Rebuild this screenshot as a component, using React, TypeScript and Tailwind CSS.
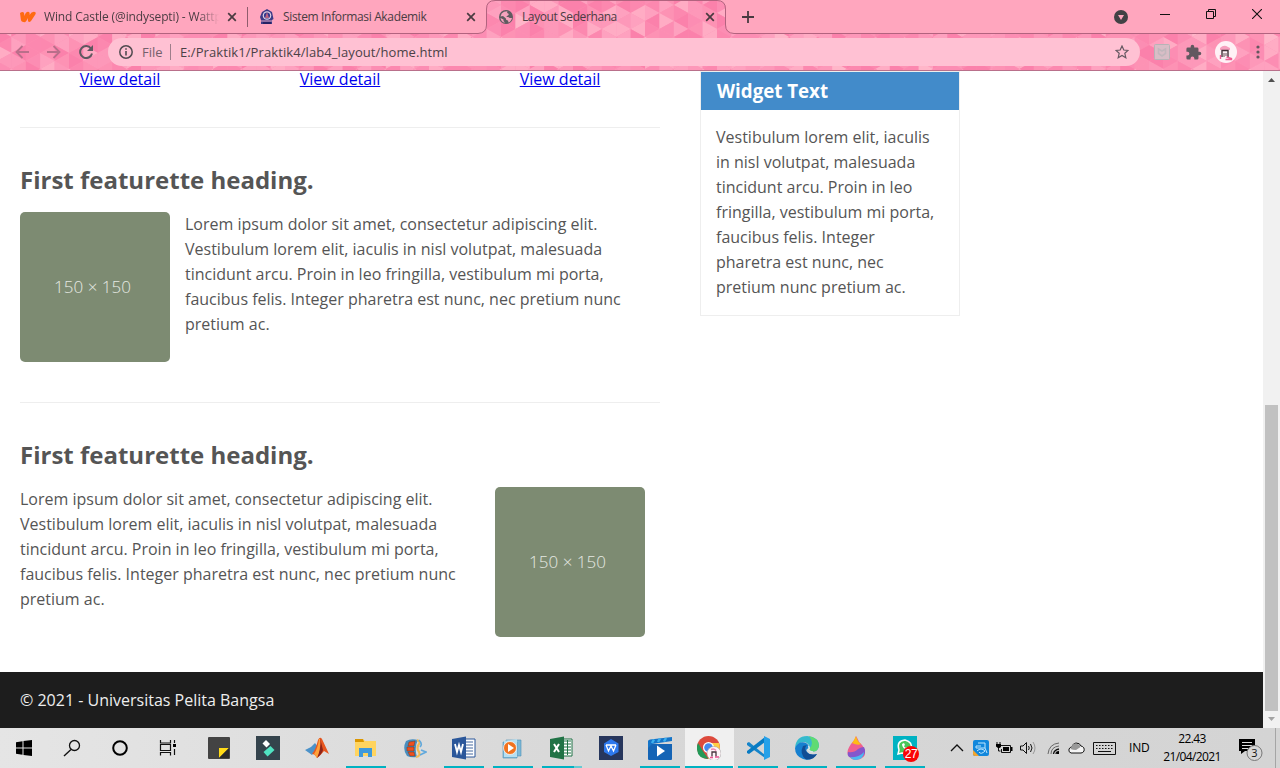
import React from "react";

const pinks = ["#fb7ea9", "#fc8db3", "#fd9abb", "#fea6c2", "#ffb3c9", "#fc86ae", "#fd93b5", "#ffc0cf"];

function noise(a: number, b: number) {
  const v = Math.sin(a * 127.1 + b * 311.7) * 43758.5453;
  return v - Math.floor(v);
}

function Triangles() {
  const shapes: React.ReactNode[] = [];
  for (let c = 0; c < 90; c++) {
    for (let r = -1; r < 6; r++) {
      const x = c * 14.4 - 3;
      const y = r * 16 + (c % 2) * 8 - 3;
      const n = Math.floor(noise(c, r) * 7.3);
      const m = Math.floor(noise(c + 40, r + 9) * 7);
      shapes.push(
        <path key={`a${c}-${r}`} fill={pinks[n]} d={`M${x} ${y}l14.5 8l-14.5 8z`} />,
        <path key={`b${c}-${r}`} fill={pinks[m]} d={`M${x + 14.5} ${y + 8}v16l-14.5 -8z`} />,
      );
    }
  }
  return <g opacity=".8">{shapes}</g>;
}

function ChromeBackdrop() {
  return (
    <svg className="absolute inset-0" width="1280" height="71" viewBox="0 0 1280 71">
      <defs>
        <clipPath id="themed">
          <path d="M0 34H478Q486 34 486 25V9Q486 1 495 1H717Q726 1 726 9V25Q726 34 734 34H1280V70H0z" />
        </clipPath>
      </defs>
      <rect width="1280" height="71" fill="#ffa6be" />
      <g clipPath="url(#themed)">
        <rect width="1280" height="71" fill="#fd93b5" />
        <Triangles />
      </g>
      <path d="M0 33.5H478Q486.500 33 486.500 25V9Q486.500 .5 495 .5H717Q725.500 .5 725.500 9V25Q725.500 33 734 33.500H1280" fill="none" stroke="#b2637f" />
      <path d="M0 70.500H1280" stroke="#b9708b" />
    </svg>
  );
}

function CloseX() {
  return (
    <svg width="10" height="10" viewBox="0 0 10 10" className="shrink-0">
      <path d="M1.200 1.200l7.600 7.600M8.800 1.200l-7.600 7.600" stroke="#4a3a40" strokeWidth="1.700" />
    </svg>
  );
}

function TabStrip() {
  return (
    <div className="relative flex h-[34px] items-center text-[12px] text-[#4a3c42]">
      <div className="flex w-[247px] items-center pl-5">
        <svg width="16" height="14" viewBox="0 0 16 14" className="mr-2">
          <path d="M0 3Q3 1 4 3L4.500 6Q6 1 9 2Q10 3 9.500 5Q12 1 15 2Q16.500 3 15 5L11 11Q9 13 8 11V8Q6 13 3.500 12Q1 12 .8 9z" fill="#ff6a12" />
        </svg>
        <span className="w-[175px] whitespace-nowrap tracking-[-0.120px] [mask-image:linear-gradient(90deg,#000_88%,transparent)]">Wind Castle (@indysepti) - Wattp</span>
        <span className="ml-2 flex"><CloseX /></span>
      </div>
      <div className="h-5 w-px bg-[#8f5c6d]" />
      <div className="flex w-[238px] items-center pl-[11px]">
        <svg width="16" height="16" viewBox="0 0 16 16" className="mr-2">
          <path d="M8 0L13 3L14.500 10L13 11V15H2V11L1 8L3 3z" fill="#3c3a86" />
          <circle cx="8" cy="6.500" r="4.300" fill="#ded1e4" />
          <circle cx="8" cy="6.500" r="3.100" fill="#34378d" />
          <path d="M6 9l2-6l2 6z" fill="#ba6382" /><path d="M2 12h12" stroke="#e0a4c2" />
          <path d="M4 13h8v2H4z" fill="#262365" />
        </svg>
        <span className="w-[174px] whitespace-nowrap tracking-[-0.350px]">Sistem Informasi Akademik</span>
        <span className="ml-[9px] flex"><CloseX /></span>
      </div>
      <div className="flex w-[240px] items-center pl-[13px]">
        <svg width="14" height="14" viewBox="0 0 14 14" className="mr-[9px]">
          <circle cx="7" cy="7" r="7" fill="#5f5b60" />
          <path d="M8.500 1.300Q7.500 3 9 3.400Q10.500 4 9 5.500Q7.500 5.500 7.500 7Q10 6.500 10.500 8H13Q12 12 9.500 12.400L9 10.500Q6.500 10 7 8.500L4 6L1.500 6.500Q2 3 5 1.700z" fill="#f5a2bd" />
          <path d="M1.500 8L4.500 9.500V11L6 12.700Q2 12 1.500 8" fill="#f5a2bd" />
        </svg>
        <span className="w-[174px] whitespace-nowrap tracking-[-0.400px]">Layout Sederhana</span>
        <span className="ml-[9px] flex"><CloseX /></span>
      </div>
      <svg width="12" height="12" className="ml-4"><path d="M6 0v12M0 6h12" stroke="#483a40" strokeWidth="1.800" /></svg>
      <svg width="14" height="14" className="ml-[360px]"><circle cx="7" cy="7" r="7" fill="#424145" /><path d="M4 5h6L7 10z" fill="#ffa6be" /></svg>
      <svg width="10" height="10" className="mb-[6px] ml-8"><path d="M0 5.500h10" stroke="#111" /></svg>
      <svg width="10" height="10" className="mb-[6px] ml-9"><path d="M.5 2.500h7v7h-7zM2.500 2.500v-2h7v7h-2" fill="none" stroke="#111" /></svg>
      <svg width="10" height="10" className="mb-[6px] ml-9"><path d="M0 0l10 10M10 0L0 10" stroke="#111" strokeWidth="1.100" /></svg>
    </div>
  );
}

function Toolbar() {
  return (
    <div className="relative flex h-[37px] items-center pb-px">
      <svg width="14" height="14" className="ml-[15px]"><path d="M14 7H2M7.500 1L1.500 7l6 6" fill="none" stroke="#b96f8a" strokeWidth="1.800" /></svg>
      <svg width="14" height="14" className="ml-[18px]"><path d="M0 7h12M6.500 1l6 6l-6 6" fill="none" stroke="#b96f8a" strokeWidth="1.800" /></svg>
      <svg width="14" height="14" className="ml-[18px]"><path d="M12 3.500A6 6 0 1 0 13 8.500" fill="none" stroke="#5f5960" strokeWidth="2" /><path d="M14 0v6H8z" fill="#5f5960" /></svg>
      <div className="ml-[15px] flex h-7 w-[1032px] items-center rounded-full bg-[#ffc1d3] pl-[11px] text-[13px] text-[#4b4147]">
        <svg width="14" height="14"><circle cx="7" cy="7" r="6.200" fill="none" stroke="#514b50" strokeWidth="1.500" /><path d="M7 6v4.500M7 3.200v1.600" stroke="#514b50" strokeWidth="1.600" /></svg>
        <span className="ml-[9px] w-[21px] pt-px whitespace-nowrap text-[#75606b]">File</span>
        <span className="ml-[7px] h-4 w-px bg-[#9e7e8b]" />
        <span className="ml-[9px] w-[935px] pt-px whitespace-nowrap tracking-[0.090px]">E:/Praktik1/Praktik4/lab4_layout/home.html</span>
        <svg width="14" height="14" viewBox="0 0 14 14"><path d="M7 1l1.800 4l4.200.4l-3.200 2.900l1 4.400L7 10.400l-3.800 2.300l1-4.400L1 5.400l4.200-.4z" fill="none" stroke="#655861" strokeWidth="1.200" /></svg>
      </div>
      <svg width="16" height="16" className="ml-[14px]"><rect x=".5" y=".5" width="15" height="15" rx="1" fill="#d9bdc6" stroke="#b7b4b7" /><path d="M4.500 5L8 7l3.500-2v4.500L8 12L4.500 9.500z" fill="none" stroke="#c3b7bd" strokeWidth="1.600" /></svg>
      <svg width="17" height="17" viewBox="0 0 24 24" className="ml-[15px]"><path d="M20.500 11H19V7a2 2 0 0 0-2-2h-4V3.500a2.500 2.500 0 0 0-5 0V5H4a2 2 0 0 0-2 2v3.800h1.500a2.700 2.700 0 0 1 0 5.400H2V20a2 2 0 0 0 2 2h3.800v-1.500a2.700 2.700 0 0 1 5.400 0V22H17a2 2 0 0 0 2-2v-4h1.500a2.500 2.500 0 0 0 0-5" fill="#625860" /></svg>
      <svg width="22" height="22" className="ml-[13px]">
        <circle cx="11" cy="11" r="11" fill="#fff1f6" />
        <path d="M5 7q4-4 8-1l2 1v2H5z" fill="#f79fbe" /><path d="M7 16V9.500h6V16" fill="none" stroke="#443239" strokeWidth="1.400" /><path d="M9 12v4M11 12v3" stroke="#6b5058" /><path d="M5.500 14v4m6-2l5 1.500v1h-6" stroke="#f05c94" strokeWidth="1.400" fill="none" />
      </svg>
      <svg width="4" height="14" className="ml-[19px]"><circle cx="2" cy="2" r="1.600" fill="#655860" /><circle cx="2" cy="7" r="1.600" fill="#655860" /><circle cx="2" cy="12" r="1.600" fill="#655860" /></svg>
    </div>
  );
}

function Placeholder() {
  return (
    <div className="flex size-[150px] shrink-0 items-center justify-center rounded-[5px] bg-[#7d8b72] pr-[5px] pb-[2px] text-[17px] font-light text-[#e5e9e2]">
      150 × 150
    </div>
  );
}

function Featurette({ flipped = false }: { flipped?: boolean }) {
  return (
    <section className="border-t border-[#eee]">
      <h2 className="mt-[34px] h-[50px] text-[24px] leading-[36px] font-bold">First featurette heading.</h2>
      <div className={flipped ? "flex h-[185px] flex-row-reverse justify-between pr-[15px]" : "flex h-[190px]"}>
        <Placeholder />
        <p className={flipped ? "w-[460px]" : "ml-[15px] w-[460px]"}>
          Lorem ipsum dolor sit amet, consectetur adipiscing elit.
          <br />Vestibulum lorem elit, iaculis in nisl volutpat, malesuada
          <br />tincidunt arcu. Proin in leo fringilla, vestibulum mi porta,
          <br />faucibus felis. Integer pharetra est nunc, nec pretium nunc
          <br />pretium ac.
        </p>
      </div>
    </section>
  );
}

function Page() {
  return (
    <div className="flex h-[657px]">
      <div className="flex w-[1263px] flex-col font-normal">
        <div className="flex h-[601px] pl-5 text-[16px] leading-[25px] text-[#555]">
          <main className="w-[640px]">
            <div className="flex h-[56px]">
              {[0, 1, 2].map((i) => (
                <div key={i} className={i === 2 ? "-mt-[4px] w-[200px] text-center" : "-mt-[4px] mr-5 w-[200px] text-center"}>
                  <a href="#" className="text-[#0000ee] underline">View detail</a>
                </div>
              ))}
            </div>
            <Featurette />
            <Featurette flipped />
          </main>
          <aside className="ml-10 h-[245px] w-[260px] border border-[#eee]">
            <h3 className="h-[38px] bg-[#428bca] pl-4 text-[18.720px] leading-[38px] font-bold text-white">Widget Text</h3>
            <p className="p-[15px] pr-[10px]">
              Vestibulum lorem elit, iaculis
              <br />in nisl volutpat, malesuada
              <br />tincidunt arcu. Proin in leo
              <br />fringilla, vestibulum mi porta,
              <br />faucibus felis. Integer
              <br />pharetra est nunc, nec
              <br />pretium nunc pretium ac.
            </p>
          </aside>
        </div>
        <footer className="flex h-14 items-center bg-[#1d1d1d] pl-5 text-[16px] font-normal text-[#eee]">© 2021 - Universitas Pelita Bangsa</footer>
      </div>
      <div className="flex w-[17px] flex-col items-center justify-between bg-[#f1f1f1]">
        <svg width="17" height="17"><path d="M5 11h7L8.500 7z" fill="#505050" /></svg>
        <div className="mt-auto h-[306px] w-[13px] bg-[#c1c1c1]" />
        <svg width="17" height="17"><path d="M5 6h7L8.500 10z" fill="#a3a3a3" /></svg>
      </div>
    </div>
  );
}

function Icon({ children }: { children: React.ReactNode }) {
  return <svg width="24" height="24" viewBox="0 0 24 24">{children}</svg>;
}

const systemIcons = [
  <Icon><path d="M4 6.300l6.500-1V11.500H4zM11.500 5.100L20 4v7.500h-8.500zM4 12.500h6.500v6.200L4 17.800zM11.500 12.500H20V20l-8.500-1.100z" fill="#000" /></Icon>,
  <Icon><circle cx="14.500" cy="9.500" r="5" fill="none" stroke="#111" strokeWidth="1.300" /><path d="M11 13.500L4 20" stroke="#111" strokeWidth="1.400" /></Icon>,
  <Icon><circle cx="12" cy="12" r="6.800" fill="none" stroke="#000" strokeWidth="2" /></Icon>,
  <Icon><path d="M4.500 4v3h10V4M4.500 19.500v-3h10v3M4.500 8.500h10v6h-10zM18.500 4v3M18.500 13v6" fill="none" stroke="#111" strokeWidth="1.200" /><path d="M17 8h3v3h-3z" /></Icon>,
];

const apps: { icon: React.ReactNode; line?: "full" | "wide" | "split" }[] = [
  { icon: <Icon><rect x="1" y="1" width="22" height="22" rx="1" fill="#434343" /><path d="M12 12h10L12 22z" fill="#ffda17" /><path d="M22 12v10H12z" fill="#2a2a2a" /></Icon> },
  { icon: <Icon><path d="M0 0h24v24H0z" fill="#34434c" /><path d="M10 4l4 4l-3.500 3.500l-4-4z" fill="#fff" /><path d="M14.500 10l4 4l-7 6.500l-4-4.500z" fill="#50e3c2" /></Icon> },
  { icon: <Icon><path d="M0 14l6-3l4-4l3 4l-6 8z" fill="#4c92c9" /><path d="M7 18Q11 13 13 4Q15 0 17 3L24 18l-5-3q-4 5-7 7q-2-4-5-4" fill="#e75720" /><path d="M15 2Q17 9 12 22q5-4 6-8z" fill="#8e2519" /><path d="M14 3Q13 12 9 18l3 4q4-9 3-19" fill="#ffa13a" /></Icon> },
  { icon: <Icon><path d="M1 3h8l2 2h11v15H1z" fill="#ffd45f" /><path d="M1 3h8l1 3H1z" fill="#db9600" /><path d="M5 12h13v9h-4v-4H9v4H5z" fill="#3e99dc" /></Icon>, line: "full" },
  { icon: <Icon><path d="M3 5q5-3 12-1q-4 7-1 17q-6 1-10-1Q-1 13 3 5" fill="#4a8ebe" /><path d="M6 6l6-1l-1 5H5zM4 11h7v4H4zM5 16h6l1 4H7z" fill="#ef4f1d" stroke="#673d33" strokeWidth=".5" /><path d="M14 4q4 2 2 4q-3 4 0 8q2 4-3 5" fill="none" stroke="#f2ba54" strokeWidth="2.200" /><path d="M16 4q4 4 1 7M18 14l5 2l-6 3" fill="none" stroke="#62a9dc" strokeWidth="1.600" /></Icon> },
  { icon: <Icon><path d="M12 3h11v18H12z" fill="#fff" stroke="#2b579a" /><path d="M14 6h7M14 9h7M14 12h7M14 15h7M14 18h7" stroke="#45699f" /><path d="M0 3L14 .5v23L0 21z" fill="#2b579a" /><path d="M3 8l2 8l2-7l2 7l2-8" fill="none" stroke="#fff" strokeWidth="1.800" /></Icon>, line: "full" },
  { icon: <Icon><path d="M5 4h15v16H5zM2 6h14v16H2z" fill="#7eb8d7" stroke="#4c91b6" strokeWidth=".6" /><path d="M3 5l13-2v18H3z" fill="#b6dff1" /><circle cx="9" cy="12" r="6.500" fill="#f17320" stroke="#fff" strokeWidth=".7" /><path d="M7 8l6 4l-6 4z" fill="#fff" /></Icon>, line: "full" },
  { icon: <Icon><path d="M12 3h10v17H12z" fill="#fff" stroke="#217346" /><path d="M14 5h7M14 8h7M14 11h7M14 14h7M14 17h7M17.500 4v15" stroke="#217346" /><path d="M0 3L14 .5v23L0 21z" fill="#217346" /><path d="M4 8l5 8M9 8l-5 8" stroke="#fff" strokeWidth="2" /></Icon>, line: "split" },
  { icon: <Icon><path d="M0 0h24v24H0z" fill="#27365c" /><path d="M12 3l7.500 4.500v8.500L12 20l-7-4V7.500z" fill="#2d78ed" /><path d="M7 9h10M7 9l2.500 6L12 10l2.500 5L17 9" fill="none" stroke="#fff" strokeWidth="1.300" /></Icon> },
  { icon: <Icon><path d="M0 8h24v15q0 1-1 1H1q-1 0-1-1z" fill="#1464b5" /><path d="M0 5q0-1 2-1.500L24 1v4L4 8L0 12z" fill="#1474c8" /><path d="M6 3.500L4 7M12 2.500L10 6M18 2l-2 3.500" stroke="#3cafed" strokeWidth="2.500" /><path d="M9 9.500l8 5.500l-8 5.500z" fill="#fff" /></Icon>, line: "full" },
  { icon: <Icon><circle cx="11.500" cy="11.500" r="11.500" fill="#dd4a3d" /><path d="M1 7l5.500 9l5 7Q-1 23 0 10z" fill="#249957" /><path d="M11 7h11q3 9-5 15l-6 1l5-9z" fill="#ffcd42" /><circle cx="11.500" cy="11.500" r="5.500" fill="#fff" /><circle cx="11.500" cy="11.500" r="4.300" fill="#4688ee" /><circle cx="17" cy="17.500" r="7" fill="#fff4f8" stroke="#999" strokeWidth=".5" /><path d="M14 13.500q3-1.500 5 1" stroke="#f283ad" strokeWidth="1.500" fill="none" /><path d="M15 20.500V16h4v4.500" fill="none" stroke="#49333d" strokeWidth="1.300" /><path d="M13 21.500h3m2-.5h4" stroke="#ed5291" strokeWidth="1.500" /></Icon>, line: "wide" },
  { icon: <Icon><path d="M1 7l2-1l16 13v3L1 9z" fill="#1685ca" /><path d="M1 17l2 1L19 6V1L1 15z" fill="#087bc3" /><path d="M18 0l6 3v18l-6 3z" fill="#26a1e9" /></Icon>, line: "full" },
  { icon: <Icon><path d="M0 12Q1 0 12 0Q24 1 24 10Q23 16 17 15.500Q13 15 14 12Q15 8 10 6Q4 5 0 12" fill="#35bacd" /><path d="M14 0Q24 2 24 10Q23 16 17 15.500Q14 15 14 13Q20 8 14 0" fill="#5fdb72" /><path d="M0 12Q3 5 10 6.500Q14 8 14 12Q10 13 12 16Q15 20 22 18Q16 26 8 23Q0 20 0 12" fill="#1680d0" /><path d="M8 10Q4 18 11 23.500Q19 24 22 18Q14 20 11 15Q9 12 12 9z" fill="#124d94" /><path d="M13.500 10Q15 12 13.500 14Q15 16 18 16" fill="none" stroke="#d9e6ea" strokeWidth="1.600" /></Icon>, line: "full" },
  { icon: <Icon><path d="M12 0Q11 4 7 8Q2 15 4 19Q7 24 12 24Q22 23 21 15Q20 10 15 6Q14 3 12 0" fill="#ef5f90" /><path d="M12 0Q10 5 8 7Q14 10 17 8Q13 5 12 0" fill="#ffbc15" /><path d="M4 16Q10 17 14 13Q17 11 20 11Q23 17 18 21Q11 22 5 21Q3 19 4 16" fill="#8456cc" /><path d="M6 21Q15 22 20 16Q20 23 12 24Q8 24 6 21" fill="#4bb8f0" /></Icon>, line: "full" },
  { icon: <Icon><path d="M0 0h24v24H0z" fill="#00b2c2" /><path d="M5 18l1-4Q3 5 12 4Q20 6 18 13Q15 18 9 17z" fill="#49c75a" stroke="#fff" strokeWidth="1.500" /><path d="M9 8q0 5 6 6l1-2l-2-1l-1 1q-2-1-2-2l1-1l-1-2z" fill="#fff" /></Icon>, line: "full" },
];

function Tray() {
  return (
    <div className="ml-auto flex h-full w-[330px] items-center text-black">
      <svg width="14" height="10"><path d="M1 8l6-6l6 6" fill="none" stroke="#111" strokeWidth="1.300" /></svg>
      <svg width="16" height="16" className="ml-[9px]"><rect width="16" height="16" rx="2" fill="#1187dc" /><path d="M0 10l6 6H2Q0 16 0 14z" fill="#f3a52d" /><path d="M5 3h7v5H3V6h5M4 11q4-4 8 0q-4 4-6 1M12 8l2 5" fill="none" stroke="#bde6ff" /></svg>
      <svg width="17" height="14" className="ml-[7px]"><path d="M4 4.500h10.500v7H5.500V8" fill="none" stroke="#111" /><path d="M7 6h6v4H7zM15 6h1.500v4H15zM0 3h5v3L3.500 7H2L0 5.500z" /><path d="M1 1v2M4 1v2M2.500 7v3h2" stroke="#111" fill="none" /></svg>
      <svg width="17" height="14" className="ml-[7px]"><path d="M.5 5v4h2.500l3.500 3.500v-11L3 5z" fill="none" stroke="#111" /><path d="M8.500 5q1.500 2 0 4M10.500 3q3 4 0 8" fill="none" stroke="#111" /><path d="M13 1q4 6 0 12" fill="none" stroke="#999" /></svg>
      <svg width="13" height="14" className="ml-[10px]"><g fill="none"><path d="M1 13Q2 3 12 2M4 13Q4 6 12 5" stroke="#666" /><path d="M6.500 13Q7 9 12 8M9 13Q9 11 12 10.500" stroke="#111" strokeWidth="1.300" /></g><path d="M10 11h2v2h-2z" /></svg>
      <svg width="17" height="12" className="ml-[8px]"><path d="M3 11Q0 10 1 7Q2 5 4 5Q5 1 8 1Q12 1 13 4Q17 5 16 9Q15 11 13 11z" fill="#f5f5f5" stroke="#111" /><path d="M2.500 7Q5 0 9 2Q12 2 12.500 5L8 8Q5 8 2.500 7z" fill="#999" /></svg>
      <svg width="23" height="13" className="ml-[8px]"><path d="M.5.5h22v12H.5z" fill="none" stroke="#111" /><path d="M3 3.500h17M3 6.500h17" stroke="#111" strokeDasharray="1.500 1.500" /><path d="M5 9.500h13" stroke="#111" /></svg>
      <span className="ml-[13px] w-[20px] text-[12px] tracking-[-0.200px] whitespace-nowrap">IND</span>
      <div className="ml-[13px] flex w-[60px] flex-col items-center text-[12px] leading-[18px] tracking-[-0.600px]"><span>22.43</span><span>21/04/2021</span></div>
      <svg width="26" height="26" className="ml-[16px]">
        <path d="M1 4h16v12H7l-4 3v-3H1z" fill="#000" /><path d="M4 7.500h10M4 10.500h10M4 13.500h6" stroke="#ddd" />
        <circle cx="16.500" cy="18" r="7.500" fill="#d6d6d6" stroke="#777" /><text x="16.500" y="22" textAnchor="middle" fontFamily="Open Sans" fontSize="11" fill="#111">3</text>
      </svg>
      <div className="ml-auto h-full w-[5px] border-l border-[#a5a5a5]" />
    </div>
  );
}

function Taskbar() {
  return (
    <div className="flex h-10 bg-linear-to-r from-[#e5e5e5] via-[#d7d7d7] to-[#d4d4d4]">
      <div className="flex w-[195px]">
        {systemIcons.map((icon, i) => <div key={i} className="flex w-12 items-center justify-center">{icon}</div>)}
      </div>
      {apps.map((app, i) => (
        <div key={i} className={app.line === "wide" ? "relative flex w-[49px] items-center justify-center bg-[#f0f0f0] pr-px" : "relative flex w-[49px] items-center justify-center pr-px"}>
          {app.icon}
          {i === 14 && <span className="absolute top-[18px] left-[22px] flex size-4 items-center justify-center rounded-full bg-[#fa0505] font-['Liberation_Sans'] text-[12px] tracking-[-0.500px] text-white">27</span>}
          {app.line === "full" && <span className="absolute bottom-0 left-[4px] h-[2px] w-10 bg-[#00b2c2]" />}
          {app.line === "wide" && <span className="absolute bottom-0 left-0 h-[2px] w-12 bg-[#00b2c2]" />}
          {app.line === "split" && <span className="absolute bottom-0 left-[4px] h-[2px] w-10 border-r-8 border-[#66cbd3] bg-[#00b2c2]" />}
        </div>
      ))}
      <Tray />
    </div>
  );
}

export default function App() {
  return (
    <div className="h-[768px] w-[1280px] overflow-hidden bg-white font-['Open_Sans',sans-serif]">
      <header className="relative h-[71px]">
        <ChromeBackdrop />
        <TabStrip />
        <Toolbar />
      </header>
      <Page />
      <Taskbar />
    </div>
  );
}
